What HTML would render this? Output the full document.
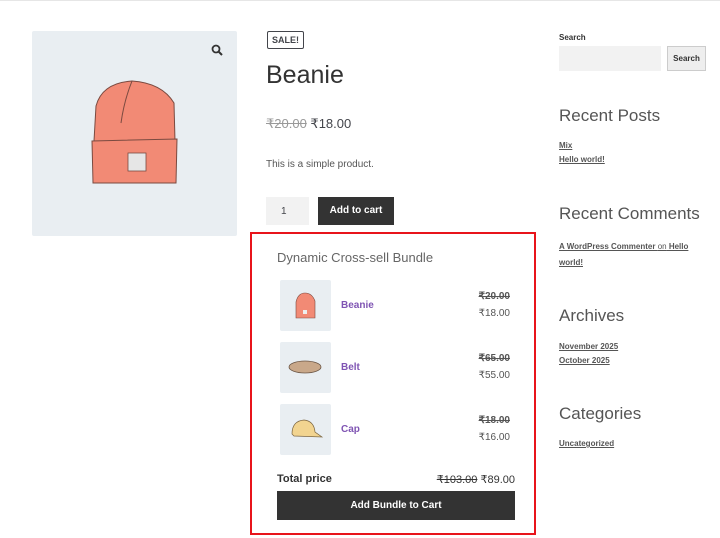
<!DOCTYPE html>
<html><head><meta charset="utf-8"><style>
*{margin:0;padding:0;box-sizing:border-box}
body{width:720px;height:538px;background:#fff;font-family:"Liberation Sans",sans-serif;color:#43454b;position:relative;overflow:hidden}
.a{position:absolute}
.topline{left:0;top:0;width:720px;height:1px;background:#e6e6e6}
.img{left:32px;top:31px;width:205px;height:205px;background:#e9eef2;border-radius:2px}
.sale{left:267px;top:31px;border:1px solid #43454b;border-radius:2px;font-size:9px;font-weight:bold;padding:3px 4px;color:#43454b}
h1{position:absolute;left:266px;top:61px;font-size:25px;font-weight:normal;color:#333}
.price{left:266px;top:116px;font-size:13px;color:#43454b}
.price s{color:#999}
.desc{left:266px;top:159px;font-size:10px;color:#555}
.qty{left:266px;top:197px;width:43px;height:28px;background:#f2f2f2;font-size:10px;padding:9px 0 0 15px}
.btn{left:318px;top:197px;width:76px;height:28px;background:#333;color:#fff;font-size:10px;font-weight:bold;text-align:center;line-height:28px}
.box{left:250px;top:232px;width:286px;height:303px;border:2px solid #e8141b}
.bt{left:277px;top:250px;font-size:13px;color:#666}
.th{width:51px;height:51px;background:#e9eef2;border-radius:2px;left:280px}
.nm{left:341px;font-size:10px;font-weight:bold;color:#7f54b3}
.op{right:210px;font-size:10px;color:#555;text-decoration:line-through;font-weight:bold}
.np{right:210px;font-size:10px;color:#555}
.tp{left:277px;top:473px;font-size:11px;font-weight:bold;color:#333}
.tv{right:205px;top:473px;font-size:11px;color:#333}
.bb{left:277px;top:491px;width:238px;height:29px;background:#333;color:#fff;font-size:10px;font-weight:bold;text-align:center;line-height:29px}
.sl{left:559px;top:33px;font-size:8px;font-weight:bold;color:#333}
.si{left:559px;top:46px;width:102px;height:25px;background:#f2f2f2}
.sb{left:667px;top:46px;width:39px;height:25px;background:#eee;border:1px solid #ccc;font-size:8px;font-weight:bold;text-align:center;line-height:23px;color:#333}
.h2{left:559px;font-size:17px;color:#555}
.lk{left:559px;font-size:8px;font-weight:bold;color:#555;text-decoration:underline;line-height:14px}
</style></head><body>
<div class="a topline"></div>
<div class="a img">
<svg width="205" height="205" viewBox="0 0 205 205">
<path d="M64 75 Q70 52 100 50 Q130 52 142 72 L143 110 L62 110 Z" fill="#f28a75" stroke="#7a4a40" stroke-width="1"/>
<path d="M100 50 Q92 70 89 92" fill="none" stroke="#7a4a40" stroke-width="1"/>
<path d="M60 110 L145 108 L144 152 L61 152 Z" fill="#f28a75" stroke="#7a4a40" stroke-width="1"/>
<rect x="96" y="122" width="18" height="18" fill="#e6e6e6" stroke="#7a4a40" stroke-width="0.8"/>
<circle cx="184" cy="18" r="3.5" fill="none" stroke="#333" stroke-width="1.8"/><path d="M186.5 20.5 L190 24" stroke="#333" stroke-width="2"/>
</svg></div>
<div class="a sale">SALE!</div>
<h1>Beanie</h1>
<div class="a price"><s>₹20.00</s> ₹18.00</div>
<div class="a desc">This is a simple product.</div>
<div class="a qty">1</div>
<div class="a btn">Add to cart</div>
<div class="a box"></div>
<div class="a bt">Dynamic Cross-sell Bundle</div>
<div class="a th" style="top:280px"><svg width="51" height="51"><path d="M16 22 Q18 13 25 13 Q32 13 35 21 L35 38 L16 38Z" fill="#f28a75" stroke="#7a4a40" stroke-width=".6"/><rect x="23" y="30" width="4" height="4" fill="#eee"/></svg></div>
<div class="a nm" style="top:300px">Beanie</div>
<div class="a op" style="top:291px">₹20.00</div>
<div class="a np" style="top:308px">₹18.00</div>
<div class="a th" style="top:342px"><svg width="51" height="51"><ellipse cx="25" cy="25" rx="16" ry="6" fill="#c9a88a" stroke="#6b5646" stroke-width=".8"/></svg></div>
<div class="a nm" style="top:362px">Belt</div>
<div class="a op" style="top:353px">₹65.00</div>
<div class="a np" style="top:370px">₹55.00</div>
<div class="a th" style="top:404px"><svg width="51" height="51"><path d="M12 30 Q12 17 24 16 Q34 17 35 28 L42 33 L14 32Z" fill="#f2d490" stroke="#7a6440" stroke-width=".7"/></svg></div>
<div class="a nm" style="top:424px">Cap</div>
<div class="a op" style="top:415px">₹18.00</div>
<div class="a np" style="top:432px">₹16.00</div>
<div class="a tp">Total price</div>
<div class="a tv"><s>₹103.00</s> ₹89.00</div>
<div class="a bb">Add Bundle to Cart</div>
<div class="a sl">Search</div>
<div class="a si"></div>
<div class="a sb">Search</div>
<div class="a h2" style="top:106px">Recent Posts</div>
<div class="a lk" style="top:139px">Mix<br>Hello world!</div>
<div class="a h2" style="top:204px">Recent Comments</div>
<div class="a lk" style="top:239px;line-height:16px;width:140px">A WordPress Commenter <span style="text-decoration:none;font-weight:normal">on</span> Hello world!</div>
<div class="a h2" style="top:306px">Archives</div>
<div class="a lk" style="top:340px">November 2025<br>October 2025</div>
<div class="a h2" style="top:404px">Categories</div>
<div class="a lk" style="top:437px">Uncategorized</div>
</body></html>
